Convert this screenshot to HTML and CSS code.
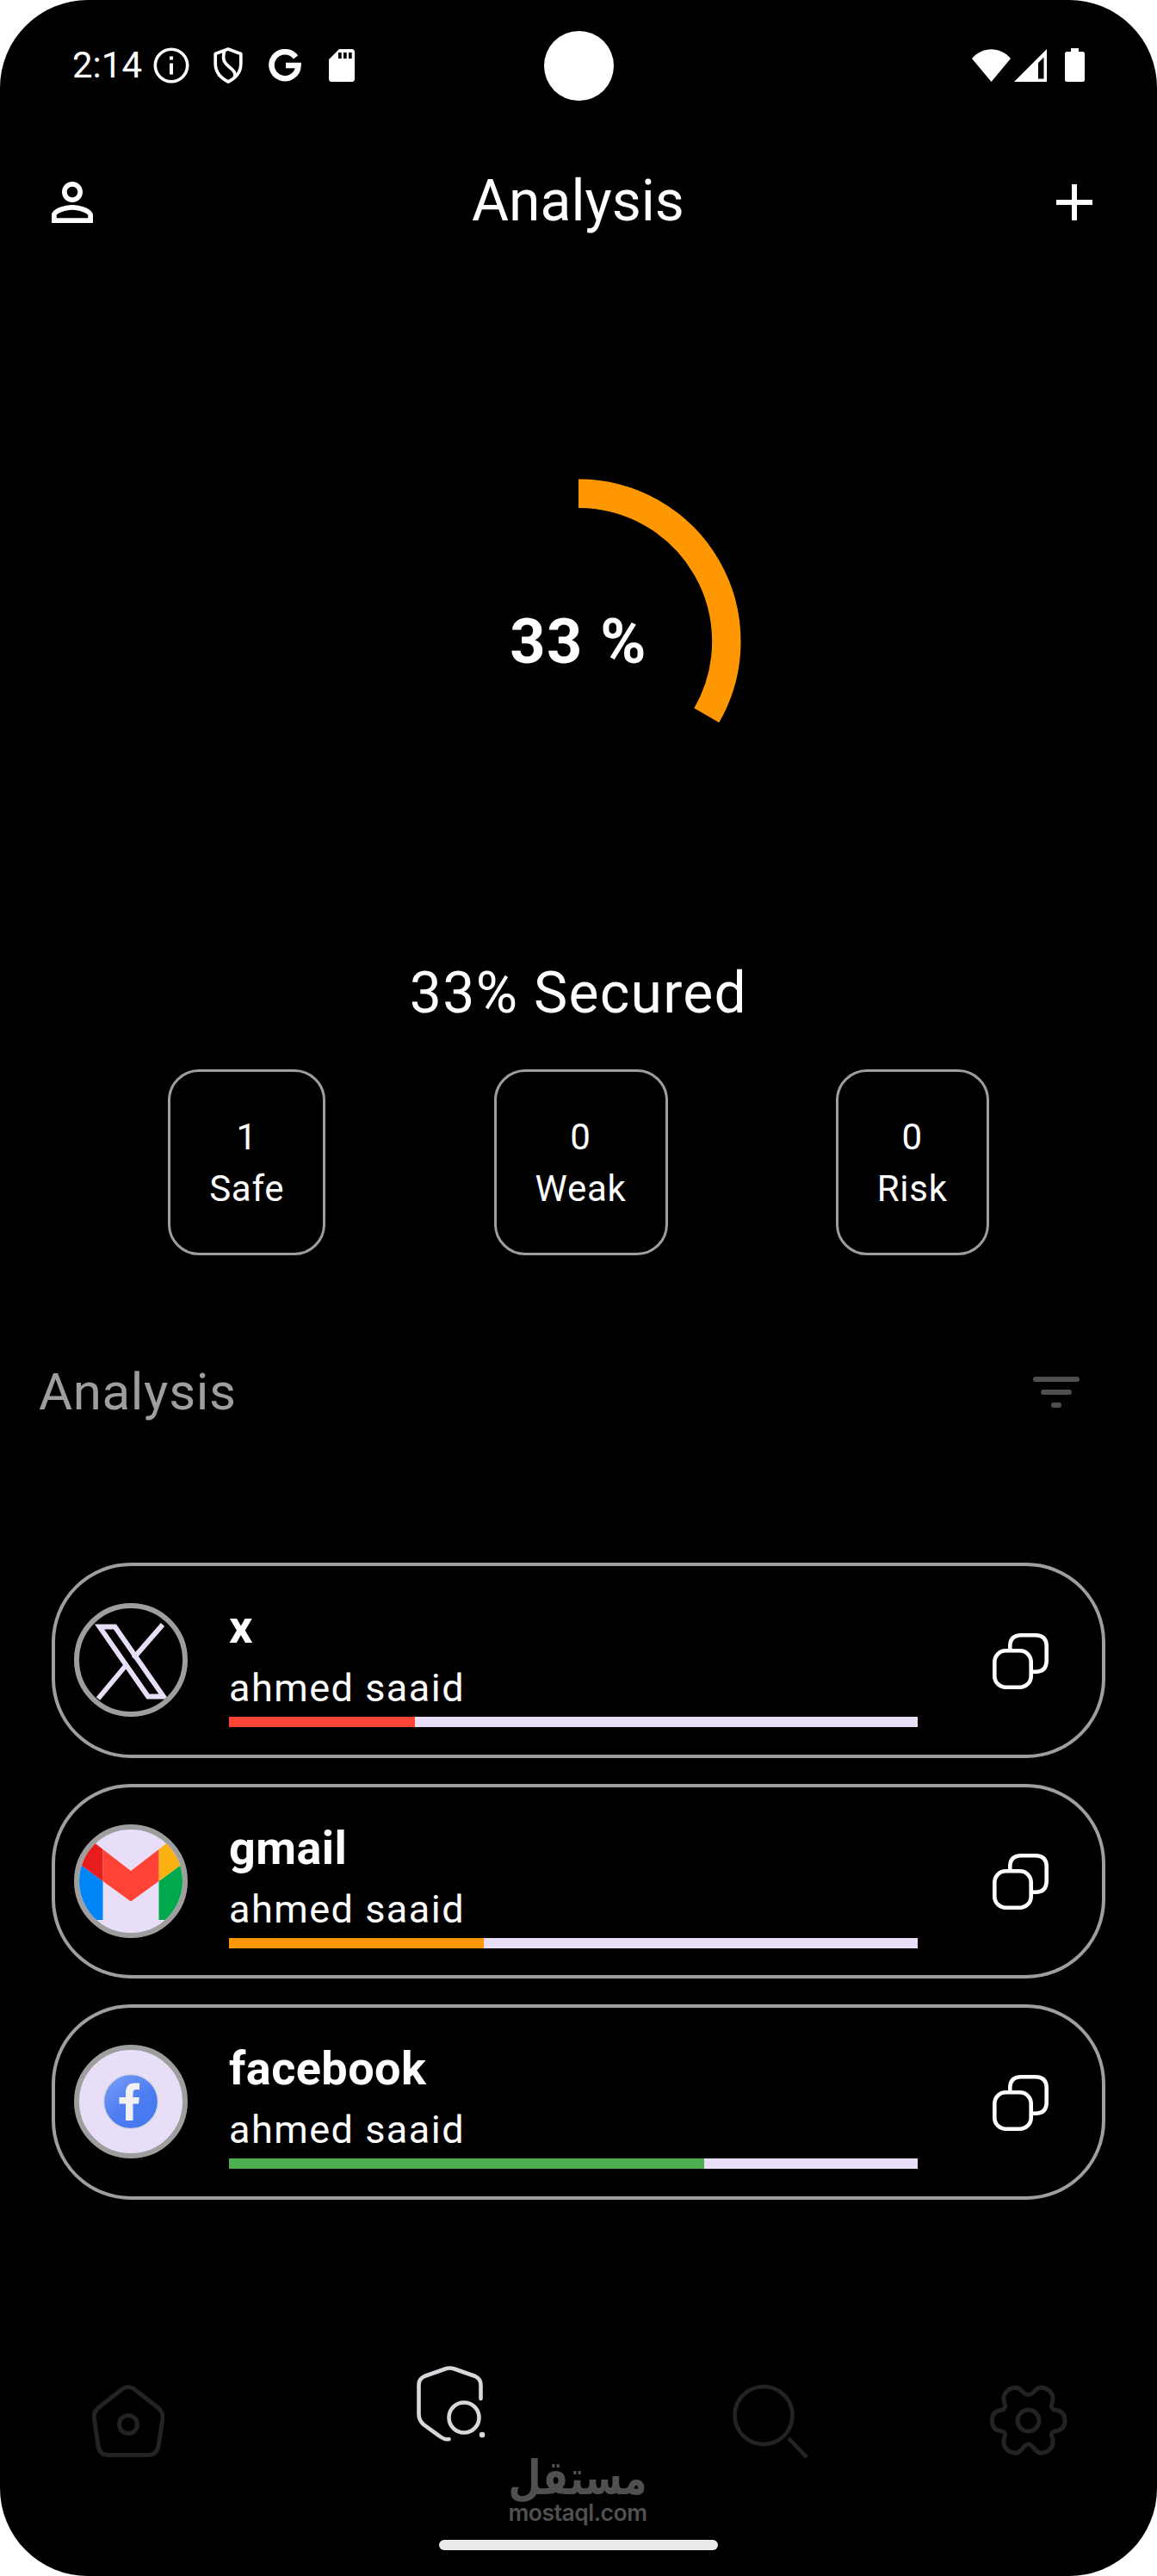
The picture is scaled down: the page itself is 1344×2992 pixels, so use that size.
FILE: index.html
```html
<!DOCTYPE html>
<html lang="en">
<head>
<meta charset="utf-8">
<title>Analysis</title>
<link rel="stylesheet" href="styles.css">
</head>
<body>
<div class="screen">
  <header class="status">
    <span class="clock">2:14</span>
    <svg class="st-info" viewBox="0 0 42 42"><circle cx="21" cy="21" r="18.700" fill="none" stroke="#fff" stroke-width="3.600"/><path d="M19 10.500h4v4h-4zM19 18.500h4v13h-4z" fill="#fff"/></svg>
    <svg class="st-shield" viewBox="0 0 34 42" fill="none" stroke="#fff" stroke-width="3.700" stroke-linejoin="round"><path d="M17 2 31.800 7.500V19C31.800 28 26 35.500 17 40 8 35.500 2.200 28 2.200 19V7.500Z"/><path d="M12.500 4.500C10 15 13 18.500 18 22.500 24 27 26 30 24.500 34.500"/></svg>
    <svg class="st-g" viewBox="0 0 38 38"><path d="M31.500 9.500A15.500 15.500 0 1 0 34.500 19H20" fill="none" stroke="#fff" stroke-width="6.600"/></svg>
    <svg class="st-sd" viewBox="0 0 30 38"><path fill="#fff" fill-rule="evenodd" d="M12 0H26.500Q30 0 30 3.500V34.500Q30 38 26.500 38H3.500Q0 38 0 34.500V12ZM11 4v7h3.700V4zM17 4v7h3.700V4zM23 4v7h3.700V4z"/></svg>
    <span class="camera"></span>
    <svg class="st-wifi" viewBox="0 0 45 38"><path fill="#fff" d="M0 11C12-3.500 33-3.500 45 11L22.500 38Z"/></svg>
    <svg class="st-signal" viewBox="0 0 38 38"><path fill="#fff" fill-rule="evenodd" d="M38 0V38H0ZM34.500 9.500 28 16V34.500H34.500Z"/></svg>
    <svg class="st-battery" viewBox="0 0 23 39"><path fill="#fff" d="M7 0h9v4h4.500Q23 4 23 6.500v30Q23 39 20.500 39h-18Q0 39 0 36.500v-30Q0 4 2.500 4H7z"/></svg>
  </header>

  <div class="appbar">
    <svg class="icon" viewBox="0 0 24 24"><path fill="#fff" d="M12 5.900c1.160 0 2.100.940 2.100 2.100s-.940 2.100-2.100 2.100S9.900 9.160 9.900 8s.940-2.100 2.100-2.100m0 9c2.970 0 6.100 1.460 6.100 2.100v1.100H5.900V17c0-.640 3.130-2.100 6.100-2.100M12 4C9.790 4 8 5.790 8 8s1.790 4 4 4 4-1.790 4-4-1.790-4-4-4m0 9c-2.670 0-8 1.340-8 4v3h16v-3c0-2.660-5.330-4-8-4"/></svg>
    <h1>Analysis</h1>
    <svg class="icon" viewBox="0 0 24 24"><path fill="#fff" d="M19 13h-6v6h-2v-6H5v-2h6V5h2v6h6z"/></svg>
  </div>

  <section class="gauge">
    <svg viewBox="0 0 378 378"><path d="M189 17.200A171.800 171.800 0 0 1 337.800 274.900" fill="none" stroke="#ff9800" stroke-width="33.400"/></svg>
    <span class="gauge-value">33 %</span>
  </section>

  <p class="secured">33% Secured</p>
  <section class="stats">
    <div class="stat"><span>1</span><span>Safe</span></div>
    <div class="stat"><span>0</span><span>Weak</span></div>
    <div class="stat"><span>0</span><span>Risk</span></div>
  </section>

  <div class="section-head">
    <h2>Analysis</h2>
    <svg class="filter" viewBox="0 0 54 36" stroke="#4f4f4f" stroke-width="6" stroke-linecap="round"><path d="M3 3H51M12 18H42M24 33H30"/></svg>
  </div>

  <main class="list">
    <article class="card">
      <div class="avatar dark"><svg viewBox="0 0 120 120"><g fill="none" stroke="#e8def8" stroke-width="5.800"><path d="M23.500 21.500H41.500L98 102.500H80Z"/><path d="M97 19 63 58M54.500 66 22 105"/></g></svg></div>
      <div class="info"><h3>x</h3><p>ahmed saaid</p><div class="bar"><div class="fill red" style="width:27%"></div></div></div>
      <svg class="copy" viewBox="0 0 65 65"><use href="#copy"/></svg>
    </article>
    <article class="card">
      <div class="avatar"><svg viewBox="0 0 120 120"><path fill="#0085f7" d="M-5 36 27.500 60V105H-5z"/><path fill="#00a94b" d="M92.500 60 125 36V105H92.500z"/><path fill="#e71d1d" d="M-5 36V30Q2 10 18 15.500L27.500 23V60z"/><path fill="#fbb112" d="M125 36V30Q118 10 102 15.500L92.500 23V60z"/><path fill="#ff4335" d="M27.500 23 60 48 92.500 23V60L60 83.500 27.500 60z"/></svg></div>
      <div class="info"><h3>gmail</h3><p>ahmed saaid</p><div class="bar"><div class="fill orange" style="width:37%"></div></div></div>
      <svg class="copy" viewBox="0 0 65 65"><use href="#copy"/></svg>
    </article>
    <article class="card">
      <div class="avatar"><svg viewBox="0 0 120 120"><defs><linearGradient id="fb" x1="0" y1="0" x2=".7" y2="1"><stop offset="0" stop-color="#7ba0f8"/><stop offset=".6" stop-color="#4f7df2"/><stop offset="1" stop-color="#4478ee"/></linearGradient></defs><circle cx="60" cy="60" r="31.500" fill="url(#fb)" stroke="#d5d5e0" stroke-width="1.500"/><path fill="#f1f1f1" d="M54 82V62.500H46.500V55H54V50Q54 38.500 64 38.500H70V46H66Q62.500 46 62.500 50V55H70L69 62.500H62.500V82z"/></svg></div>
      <div class="info"><h3>facebook</h3><p>ahmed saaid</p><div class="bar"><div class="fill green" style="width:69%"></div></div></div>
      <svg class="copy" viewBox="0 0 65 65"><g id="copy" fill="none" stroke="#fff" stroke-width="4.600"><rect x="2.300" y="20.300" width="42.400" height="42.400" rx="13"/><path d="M20.300 20V15.300Q20.300 2.300 33.300 2.300H49.700Q62.700 2.300 62.700 15.300V31.700Q62.700 44.700 49.700 44.700H45"/></g></svg>
    </article>
  </main>

  <nav class="nav">
    <svg class="n-home" viewBox="0 0 84 84" fill="none" stroke="#222324" stroke-width="5"><path d="M35 5Q42 0 49 5L76 26Q83 32 82 39L77 71Q75 81.500 65 81.500H19Q9 81.500 7 71L2.500 39Q1 32 8 26Z"/><circle cx="42" cy="46" r="10.500"/></svg>
    <svg class="n-shield" viewBox="0 0 84 88" fill="none" stroke="#d8d8dc" stroke-width="4.600" stroke-linecap="round"><path d="M75.500 38V22Q75.500 15 69 12L45 3.500Q39.500 1.500 34 3.500L10 12Q3.500 15 3.500 22V56Q3.500 63 9 68L29 82.500Q34 86 38.500 85"/><circle cx="56" cy="60" r="17.500"/><path d="M77 80h.1" stroke-width="6.500"/></svg>
    <svg class="n-search" viewBox="0 0 88 88" fill="none" stroke="#222324" stroke-width="4.700"><circle cx="36" cy="36.500" r="33.500"/><path d="M65 63 86 85"/></svg>
    <svg class="n-gear" viewBox="0 0 90 84" fill="none" stroke="#222324" stroke-width="5"><path d="M37 7Q44.500 16 52 7Q58 0 67 5.500Q75 11 72.500 20Q69 28.500 77 29.500Q87 31 87 41.500Q87 52 77 53.500Q69 54.500 72.500 62Q75 72 67 77Q58 82 52 75Q44.500 63 37 75Q31 82 22 77Q14 72 16.500 62Q20 54.500 12 53.500Q2.500 52 2.500 41.500Q2.500 31 12 29.500Q20 28.500 16.500 20Q14 11 22 5.500Q31 0 37 7Z"/><circle cx="44.500" cy="41.500" r="12.500"/></svg>
  </nav>

  <div class="watermark"><span class="wm-ar" lang="ar" dir="rtl">مستقل</span><span class="wm-en">mostaql.com</span></div>
  <div class="home-bar"></div>
</div>
</body>
</html>
```
FILE: styles.css
```css
* { box-sizing: border-box; margin: 0; padding: 0; }
body { background: #fff; font-family: Roboto, sans-serif; color: #fff; }
svg { display: block; flex: none; }
.screen { position: relative; width: 1344px; height: 2992px; background: #000; border-radius: 102px; overflow: hidden; display: flex; flex-direction: column; }

.status { position: relative; height: 151px; flex: none; display: flex; align-items: center; padding: 0 84px 0 84px; }
.clock { font-size: 42px; line-height: 50px; width: 94px; }
.st-info { width: 42px; height: 42px; }
.st-shield { width: 34px; height: 42px; margin-left: 28px; }
.st-g { width: 38px; height: 38px; margin-left: 30px; }
.st-sd { width: 30px; height: 38px; margin-left: 32px; }
.camera { position: absolute; left: 632px; top: 36px; width: 81px; height: 81px; border-radius: 50%; background: #fff; }
.st-wifi { width: 45px; height: 38px; margin-left: auto; }
.st-signal { width: 38px; height: 38px; margin-left: 4px; }
.st-battery { width: 23px; height: 39px; margin-left: 21px; }

.appbar { height: 168px; flex: none; display: flex; align-items: center; justify-content: space-between; padding: 0 60px 0 48px; }
.appbar h1 { font-size: 66px; line-height: 84px; font-weight: 400; margin-left: 11px; padding-bottom: 3px; }
.icon { width: 72px; height: 72px; }

.gauge { height: 378px; flex: none; margin-top: 237px; display: grid; place-items: center; }
.gauge > * { grid-area: 1 / 1; }
.gauge svg { width: 378px; height: 378px; }
.gauge-value { font-size: 72px; line-height: 84px; font-weight: 700; letter-spacing: 1.5px; padding-top: 2px; }

.secured { margin-top: 170px; height: 100px; line-height: 100px; flex: none; text-align: center; font-size: 66px; letter-spacing: 1.3px; }
.stats { margin-top: 38px; flex: none; display: flex; justify-content: space-evenly; }
.stat { display: flex; flex-direction: column; align-items: center; padding: 46px 45px 44px; border: 3px solid #9e9e9e; border-radius: 36px; font-size: 42px; line-height: 60px; letter-spacing: .75px; }

.section-head { margin-top: 109px; height: 100px; flex: none; display: flex; align-items: center; justify-content: space-between; padding: 0 90px 0 45px; }
.section-head h2 { font-size: 60px; line-height: 84px; font-weight: 400; letter-spacing: .65px; color: #9e9e9e; }
.filter { width: 54px; height: 36px; }

.list { margin-top: 148px; flex: none; display: flex; flex-direction: column; gap: 30px; padding: 0 60px; }
.card { height: 226.5px; border: 4px solid #9e9e9e; border-radius: 92px; display: flex; align-items: center; padding-left: 22px; padding-right: 62px; }
.avatar { width: 132px; height: 132px; flex: none; border: 6px solid #9e9e9e; border-radius: 50%; background: #e8def8; overflow: hidden; }
.avatar.dark { background: #000; }
.avatar svg { width: 120px; height: 120px; }
.info { width: 800px; margin-left: 48px; margin-right: auto; padding-top: 2px; }
.info h3 { font-size: 54px; line-height: 75px; font-weight: 700; letter-spacing: .45px; }
.info p { font-size: 45px; line-height: 67px; letter-spacing: 1.5px; }
.bar { height: 12px; background: #e8def8; }
.fill { height: 12px; }
.red { background: #fd4435; }
.orange { background: #ff9800; }
.green { background: #4caf50; }
.copy { width: 65px; height: 65px; margin-top: 2px; }

.nav { margin-top: 193px; height: 108px; flex: none; display: flex; align-items: flex-start; padding-left: 107px; }
.n-home { width: 84px; height: 84px; margin-top: 22px; }
.n-shield { width: 84px; height: 88px; margin-left: 292px; }
.n-search { width: 88px; height: 88px; margin-left: 284px; margin-top: 21px; }
.n-gear { width: 90px; height: 84px; margin-left: 211px; margin-top: 22px; }

.watermark { position: absolute; left: 571px; top: 2851px; width: 200px; display: flex; flex-direction: column; align-items: center; color: #505050; }
.wm-ar { font: 700 44px/54px "DejaVu Sans", sans-serif; transform: scaleY(1.25); }
.wm-en { font: 600 26.5px/30px Inter, sans-serif; letter-spacing: -.5px; margin-top: -2px; }
.home-bar { position: absolute; left: 510px; top: 2950px; width: 324px; height: 12px; border-radius: 6px; background: #ebebeb; }
```
